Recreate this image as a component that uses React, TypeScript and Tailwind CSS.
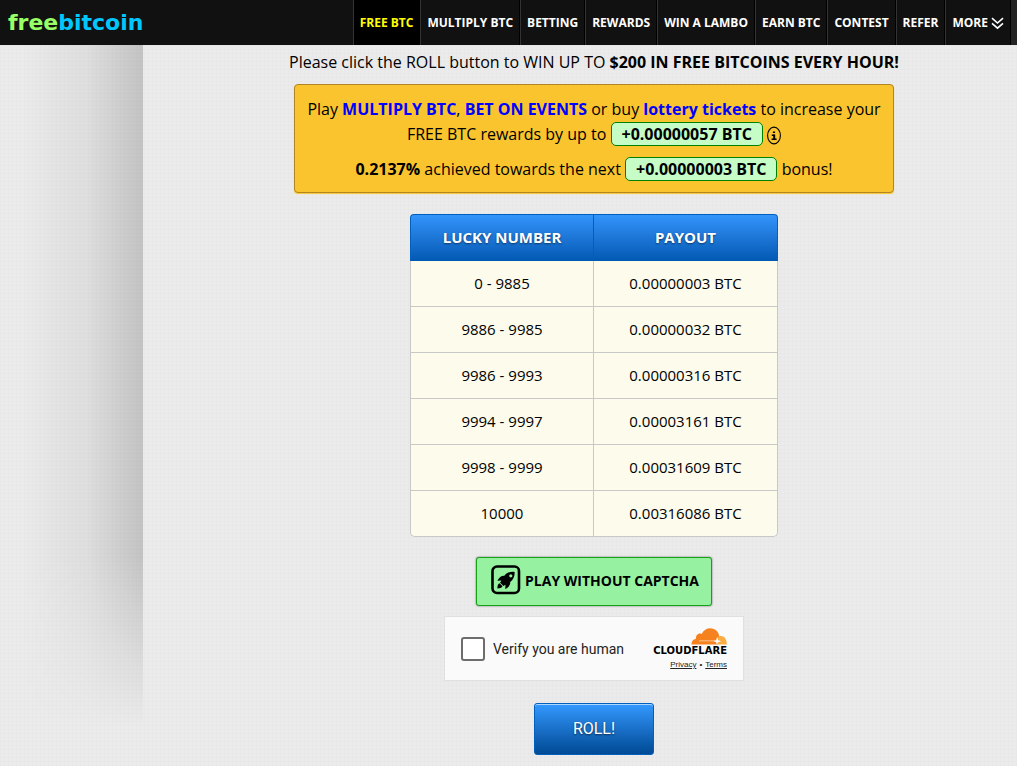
import { useState } from 'react';
import { clsx } from 'clsx';

const navItems = [
  'FREE BTC',
  'MULTIPLY BTC',
  'BETTING',
  'REWARDS',
  'WIN A LAMBO',
  'EARN BTC',
  'CONTEST',
  'REFER',
  'MORE',
];

const payouts = [
  { range: '0 - 9885', payout: '0.00000003 BTC' },
  { range: '9886 - 9985', payout: '0.00000032 BTC' },
  { range: '9986 - 9993', payout: '0.00000316 BTC' },
  { range: '9994 - 9997', payout: '0.00003161 BTC' },
  { range: '9998 - 9999', payout: '0.00031609 BTC' },
  { range: '10000', payout: '0.00316086 BTC' },
];

function ChevronsIcon() {
  return (
    <svg width="13" height="13" viewBox="0 0 13 13" fill="none" stroke="currentColor" strokeWidth="1.6" className="mt-0.5 ml-[3px]">
      <path d="M1 1.2 6.5 6 12 1.2M1 6.4l5.5 4.8L12 6.4" />
    </svg>
  );
}

function InfoIcon() {
  return (
    <svg width="14" height="19" viewBox="0 0 14 19" fill="none" stroke="currentColor">
      <ellipse cx="7" cy="9.5" rx="6.4" ry="8.4" strokeWidth="1.1" />
      <path d="M5.9 6.2h2.2M4.8 9.2h2.8M4.6 13.3h5" strokeWidth="1.5" />
      <path d="M7.2 8.5v5" strokeWidth="2" />
    </svg>
  );
}

function RocketIcon() {
  return (
    <svg width="30" height="30" viewBox="0 0 30 30" fill="none">
      <rect x="1.5" y="1.5" width="26.5" height="26.5" rx="4.5" stroke="#000" strokeWidth="2.6" />
      <path
        fill="#000"
        fillRule="evenodd"
        d="M23.6 6.9c-4.4-.5-7.900.8-10.200 3.800-3-.2-5.400 1.700-7 5.100l4-.3-1.300 2.200 3.300 3.200 2.100-1.200-.3 4.300c3.300-1.500 5.300-4 5-7 3.200-2.500 4.700-5.800 4.400-10.100ZM19.800 9.200a1.600 1.600 0 1 0 0 3.200 1.600 1.600 0 0 0 0-3.200Z"
      />
      <path fill="#000" d="M8.5 18.300c-1.600.7-2.100 2.500-2.100 5.100 2.600 0 4.400-.5 5.100-2.100Z" />
    </svg>
  );
}

function CloudIcon() {
  return (
    <svg width="36" height="17" viewBox="0 0 36 17">
      <path fill="#f6821f" d="M.5 16.500c-.2-3 1.500-5.200 4.300-5.500C4.700 7.200 7.400 4.600 10.700 6 12.400 2.300 15.700.3 19.200.3c5.200 0 8.700 3.800 9 8.200l-1.600 8Z" />
      <path fill="#fbad41" d="M27.500 8.300c5-1.700 8.400 2 8.300 8.200h-10Z" />
      <path d="M8 12.800h16.500" stroke="#fbc391" strokeWidth="1" />
      <path fill="#fafafa" d="m26.300 8.800.8 3.200 3 1.200-3 1-1.300 2.300-.9-2.400-2.600-.8 2.800-1.400Z" />
    </svg>
  );
}

function BonusBadge({ children }: { children: string }) {
  return (
    <span className="inline-block rounded-[5px] border border-[#008000] bg-[#c6fdc6] px-2.5 leading-[22px] font-bold">
      {children}
    </span>
  );
}

function NavBar() {
  return (
    <header className="flex h-[45px] justify-between bg-[#111]">
      <a href="#" className="pl-2 font-['DejaVu_Sans',sans-serif] text-[22px] leading-[45px] font-bold text-[#99ff66]">
        free<span className="text-[#00c8ff]">bitcoin</span>
      </a>
      <nav className="flex bg-[#222] pr-1.5">
        {navItems.map((item, i) => (
          <a
            key={item}
            href="#"
            className={clsx(
              'flex items-center border-r border-l border-r-black border-l-[#333] px-1.5 text-[12px] font-bold whitespace-nowrap',
              i === 0 ? 'bg-black text-[#ffff00]' : 'bg-[#111] text-white',
            )}
          >
            {item}
            {item === 'MORE' && <ChevronsIcon />}
          </a>
        ))}
      </nav>
    </header>
  );
}

function BonusBox() {
  return (
    <section className="mt-[9px] w-full max-w-[600px] rounded-[4px] border border-[#b08523] bg-[#fac42f] px-2.5 pt-3 pb-2.5 text-center text-[16px] leading-[25px] shadow-[0_1px_1px_#fbc42e]">
      <p>
        Play <a href="#" className="font-bold text-[#0000ff]">MULTIPLY BTC</a>,{' '}
        <a href="#" className="font-bold text-[#0000ff]">BET ON EVENTS</a> or buy{' '}
        <a href="#" className="font-bold text-[#0000ff]">lottery tickets</a>
        {' to increase your '}
        {'FREE BTC rewards by up to '}
        <BonusBadge>+0.00000057 BTC</BonusBadge>{' '}
        <button type="button" aria-label="Bonus details" className="inline-block h-[19px] align-middle">
          <InfoIcon />
        </button>
      </p>
      <p className="mt-2.5">
        <b>0.2137%</b> achieved towards the next <BonusBadge>+0.00000003 BTC</BonusBadge> bonus!
      </p>
    </section>
  );
}

function PayoutTable() {
  return (
    <table className="mt-[21px] w-[368px] max-w-full table-fixed border-separate border-spacing-0 text-center text-[15px]">
      <thead>
        <tr className="h-[47px] text-white [text-shadow:0_1px_2px_rgba(0,0,0,0.5)]">
          <th className="w-[183px] rounded-tl-[4px] border-t border-l border-[#0160bd] bg-linear-to-b from-[#3394fb] to-[#0159b3] pb-0.5 font-bold">
            LUCKY NUMBER
          </th>
          <th className="rounded-tr-[4px] border-x border-t border-[#0160bd] bg-linear-to-b from-[#3394fb] to-[#0159b3] pb-0.5 font-bold">
            PAYOUT
          </th>
        </tr>
      </thead>
      <tbody>
        {payouts.map((row, i) => {
          const last = i === payouts.length - 1;
          return (
            <tr key={row.range} className="h-[46px]">
              <td className={clsx('border-b border-l border-[#c8c8c8] bg-[#fdfbec]', last && 'rounded-bl-[5px]')}>{row.range}</td>
              <td className={clsx('border-x border-b border-[#c8c8c8] bg-[#fdfbec]', last && 'rounded-br-[5px]')}>{row.payout}</td>
            </tr>
          );
        })}
      </tbody>
    </table>
  );
}

function Turnstile() {
  const [checked, setChecked] = useState(false);

  return (
    <div className="mt-2.5 flex h-[65px] w-[300px] items-center justify-between border border-[#e0e0e0] bg-[#fafafa] px-4">
      <label className="flex items-center gap-2 font-['Roboto',sans-serif] text-[14px] leading-6 text-[#232323]">
        <input
          type="checkbox"
          checked={checked}
          onChange={(e) => setChecked(e.target.checked)}
          className="size-6 appearance-none rounded-[3px] border-2 border-[#6d6d6d] bg-white checked:bg-[#6d6d6d]"
        />
        Verify you are human
      </label>
      <div className="flex flex-col items-end">
        <CloudIcon />
        <span className="font-['DejaVu_Sans',sans-serif] text-[10px] leading-[12px] font-bold text-black">CLOUDFLARE</span>
        <div className="flex gap-[3px] pt-[3px] font-['Liberation_Sans',sans-serif] text-[8px] leading-[10px] text-[#232323]">
          <a href="#" className="underline">Privacy</a>
          <span>•</span>
          <a href="#" className="underline">Terms</a>
        </div>
      </div>
    </div>
  );
}

export default function App() {
  return (
    <div className="min-h-screen bg-[#ebebeb] bg-[repeating-linear-gradient(0deg,rgba(0,0,0,0.012)_0_1px,transparent_1px_4px),repeating-linear-gradient(90deg,rgba(0,0,0,0.006)_0_1px,transparent_1px_4px)] font-['Open_Sans',sans-serif] text-black">
      <NavBar />
      <div className="flex">
        <aside className="h-[681px] w-[143px] shrink-0 bg-[linear-gradient(90deg,transparent_15%,rgba(0,0,0,0.05)_60%,rgba(0,0,0,0.17))] [mask-image:linear-gradient(#000_75%,transparent)]" />
        <main className="flex min-w-0 flex-1 flex-col items-center pt-[5px] pb-[11px] pl-7">
          <p className="text-[16px] leading-[25px]">
            Please click the ROLL button to WIN UP TO <b>$200 IN FREE BITCOINS EVERY HOUR!</b>
          </p>
          <BonusBox />
          <PayoutTable />
          <button
            type="button"
            className="mt-5 flex h-[49px] items-center gap-1 rounded-[3px] border border-[#18a018] bg-[#96f2a1] pr-3 pb-[3px] pl-3.5 text-[14px] font-bold shadow-[0_0_2px_rgba(0,0,0,0.6)]"
          >
            <RocketIcon />
            PLAY WITHOUT CAPTCHA
          </button>
          <Turnstile />
          <button
            type="button"
            className="mt-[22px] h-[52px] w-[120px] rounded-[3px] border border-[#0160bd] bg-linear-to-b from-[#3399ff] to-[#004a95] font-['Roboto',sans-serif] text-[16px] text-white shadow-[inset_0_1px_0_rgba(255,255,255,0.6)] [text-shadow:0_1px_2px_rgba(0,0,0,0.6)]"
          >
            ROLL!
          </button>
        </main>
      </div>
    </div>
  );
}
